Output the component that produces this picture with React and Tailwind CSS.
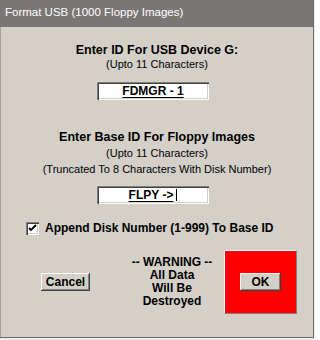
import React from "react";

const btn =
  "bg-[#d4d0c8] shadow-[inset_-1px_-1px_0_#404040,inset_1px_1px_0_#ffffff,inset_-2px_-2px_0_#808080] flex items-center justify-center text-[12px] font-bold text-black";

const field =
  "bg-white shadow-[inset_1px_1px_0_#808080,inset_2px_2px_0_#404040,inset_-1px_-1px_0_#ffffff,inset_-2px_-2px_0_#d4d0c8] flex items-center justify-center text-[12px] font-bold text-black";

export default function App() {
  return (
    <div className="w-[315px] h-[340px] bg-[#ececec] font-['Liberation_Sans',Arial,sans-serif]">
      <div className="w-[314px] h-[338px] flex flex-col border-r border-b border-[#6b6b6b]">
        <div className="h-[27px] bg-[#7a7675] flex items-center pl-[5px] pb-[2px] text-white text-[11.5px]">
          Format USB (1000 Floppy Images)
        </div>
        <div className="flex-1 bg-[#d4d0c8] border-l border-[#a3a09a] flex flex-col text-black">
          <div className="mt-[16px] leading-[14px] text-center text-[12.5px] font-bold">
            Enter ID For USB Device G:
          </div>
          <div className="leading-[14px] text-center text-[11px]">(Upto 11 Characters)</div>
          <div className={`${field} mt-[11px] ml-[96px] w-[112px] h-[18px]`}>
            <span className="underline underline-offset-[2px]">FDMGR - 1</span>
          </div>

          <div className="mt-[29px] leading-[16px] text-center text-[12.5px] font-bold">
            Enter Base ID For Floppy Images
          </div>
          <div className="leading-[16px] text-center text-[11px]">(Upto 11 Characters)</div>
          <div className="leading-[16px] text-center text-[11px]">
            (Truncated To 8 Characters With Disk Number)
          </div>
          <div className={`${field} mt-[9px] ml-[96px] w-[112px] h-[18px]`}>
            <span className="underline underline-offset-[2px]">FLPY -&gt;</span>
            <span className="ml-[3px] w-[1px] h-[12px] bg-black inline-block" />
          </div>

          <div className="mt-[18px] ml-[25px] flex items-center h-[13px]">
            <div className="w-[13px] h-[13px] bg-white shadow-[inset_1px_1px_0_#808080,inset_2px_2px_0_#404040,inset_-1px_-1px_0_#ffffff,inset_-2px_-2px_0_#d4d0c8] flex items-center justify-center">
              <svg width="9" height="9" viewBox="0 0 9 9">
                <path d="M1 4 L3 6 L8 1" stroke="#000" strokeWidth="1.8" fill="none" />
              </svg>
            </div>
            <span className="ml-[6px] text-[12px] font-bold leading-[13px]">
              Append Disk Number (1-999) To Base ID
            </span>
          </div>

          <div className="mt-[15px] flex items-center">
            <div className={`${btn} ml-[40px] w-[49px] h-[18px]`}>Cancel</div>
            <div className="ml-[37px] w-[90px] text-center text-[12px] font-bold leading-[13px]">
              <div>-- WARNING --</div>
              <div>All Data</div>
              <div>Will Be</div>
              <div>Destroyed</div>
            </div>
            <div className="ml-[7px] w-[73px] h-[64px] bg-[#ff0000] border-t border-l border-white border-r border-b border-r-[#808080] border-b-[#808080] flex items-center justify-center">
              <div className={`${btn} w-[41px] h-[18px]`}>OK</div>
            </div>
          </div>
        </div>
      </div>
    </div>
  );
}
